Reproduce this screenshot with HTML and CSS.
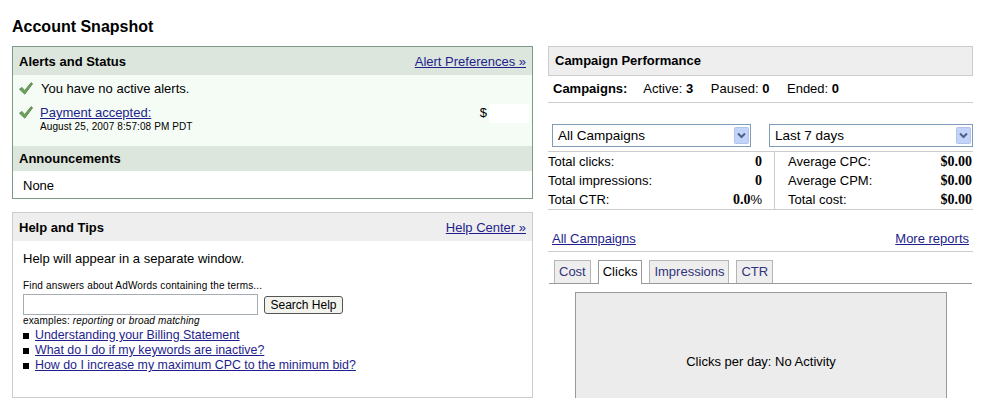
FILE: index.html
```html
<!DOCTYPE html>
<html>
<head>
    <title>Account Snapshot</title>
    <link rel="stylesheet" href="styles.css">
</head>
<body>
    <div class="page">
        <h1 class="title">Account Snapshot</h1>
        <div class="columns">
            <div class="left">
                <div class="box alerts">
                    <div class="box-head">
                        <span>Alerts and Status</span>
                        <a href="#">Alert Preferences &raquo;</a>
                    </div>
                    <div class="alerts-body">
                        <div class="alert-row">
                            <svg class="check" width="14" height="13" viewBox="0 0 14 13"><path d="M0.5 7.2 L3 5.4 L5.6 8.6 L12.2 0.6 L13.6 1.8 L5.8 12.2 Z" fill="#6fa45c" stroke="#4f7f44" stroke-width="0.8"/></svg>
                            <span>You have no active alerts.</span>
                        </div>
                        <div class="alert-row payment">
                            <svg class="check" width="14" height="13" viewBox="0 0 14 13"><path d="M0.5 7.2 L3 5.4 L5.6 8.6 L12.2 0.6 L13.6 1.8 L5.8 12.2 Z" fill="#6fa45c" stroke="#4f7f44" stroke-width="0.8"/></svg>
                            <div class="payment-text">
                                <a href="#">Payment accepted:</a>
                                <div class="date">August 25, 2007 8:57:08 PM PDT</div>
                            </div>
                            <div class="amount">$<span class="amount-box"></span></div>
                        </div>
                    </div>
                    <div class="box-head sub">Announcements</div>
                    <div class="none">None</div>
                </div>

                <div class="box help">
                    <div class="box-head grey">
                        <span>Help and Tips</span>
                        <a href="#">Help Center &raquo;</a>
                    </div>
                    <div class="help-body">
                        <p class="help-note">Help will appear in a separate window.</p>
                        <div class="small">Find answers about AdWords containing the terms...</div>
                        <div class="search">
                            <input type="text" class="search-input">
                            <button class="search-btn">Search Help</button>
                        </div>
                        <div class="small">examples: <i>reporting</i> or <i>broad matching</i></div>
                        <ul class="help-links">
                            <li><a href="#">Understanding your Billing Statement</a></li>
                            <li><a href="#">What do I do if my keywords are inactive?</a></li>
                            <li><a href="#">How do I increase my maximum CPC to the minimum bid?</a></li>
                        </ul>
                    </div>
                </div>
            </div>

            <div class="right">
                <div class="perf-head">Campaign Performance</div>
                <div class="counts">
                    <b>Campaigns:</b>
                    <span>Active: <b>3</b></span>
                    <span>Paused: <b>0</b></span>
                    <span>Ended: <b>0</b></span>
                </div>
                <div class="selects">
                    <div class="select first">
                        <span>All Campaigns</span>
                        <svg class="arrow" width="15" height="17" viewBox="0 0 15 17"><rect x="0.5" y="0.5" width="14" height="16" rx="1" fill="#c3d4fa" stroke="#b0c3ea"/><path d="M4 6.5 L7.5 10 L11 6.5" fill="none" stroke="#4d6185" stroke-width="2"/></svg>
                    </div>
                    <div class="select second">
                        <span>Last 7 days</span>
                        <svg class="arrow" width="15" height="17" viewBox="0 0 15 17"><rect x="0.5" y="0.5" width="14" height="16" rx="1" fill="#c3d4fa" stroke="#b0c3ea"/><path d="M4 6.5 L7.5 10 L11 6.5" fill="none" stroke="#4d6185" stroke-width="2"/></svg>
                    </div>
                </div>
                <div class="stats">
                    <div class="half left-half">
                        <div class="stat"><span>Total clicks:</span><b>0</b></div>
                        <div class="stat"><span>Total impressions:</span><b>0</b></div>
                        <div class="stat"><span>Total CTR:</span><span><b>0.0</b>%</span></div>
                    </div>
                    <div class="half right-half">
                        <div class="stat"><span>Average CPC:</span><b>$0.00</b></div>
                        <div class="stat"><span>Average CPM:</span><b>$0.00</b></div>
                        <div class="stat"><span>Total cost:</span><b>$0.00</b></div>
                    </div>
                </div>
                <div class="report-links">
                    <a href="#">All Campaigns</a>
                    <a href="#">More reports</a>
                </div>
                <div class="tabs">
                    <span class="tab">Cost</span>
                    <span class="tab active">Clicks</span>
                    <span class="tab">Impressions</span>
                    <span class="tab">CTR</span>
                </div>
                <div class="chart">Clicks per day: No Activity</div>
            </div>
        </div>
    </div>
</body>
</html>
```

FILE: styles.css
```css
body {
    margin: 0;
    background: #fff;
    color: #000;
    font-family: "Liberation Sans", Arial, sans-serif;
    font-size: 13px;
}

a {
    color: #1e1e8c;
}

.page {
    padding: 17px 0 0 12px;
}

.title {
    margin: 0 0 9px;
    font-size: 16px;
    line-height: 20px;
    font-weight: bold;
}

.columns {
    display: flex;
    gap: 15px;
}

.left {
    width: 521px;
}

.right {
    width: 425px;
}

/* boxes on the left */

.box {
    border: 1px solid #ccc;
}

.alerts {
    border-color: #7c9a84;
}

.box-head {
    height: 28px;
    padding: 0 6px;
    display: flex;
    align-items: center;
    justify-content: space-between;
    background: #dce6dd;
    font-weight: bold;
}

.box-head a {
    font-weight: normal;
}

.box-head.sub {
    height: 25px;
}

.box-head.grey {
    background: #eee;
}

.alerts-body {
    background: #f5fcf5;
    padding: 6px 3px 13px 6px;
}

.alert-row {
    display: flex;
    align-items: flex-start;
    line-height: 16px;
}

.alert-row .check {
    margin: 1px 8px 0 0;
    flex-shrink: 0;
}

.payment {
    margin-top: 8px;
}

.payment .check {
    margin-right: 7px;
}

.date {
    font-size: 10px;
    line-height: 12px;
    letter-spacing: 0.1px;
}

.amount {
    margin-left: auto;
    display: flex;
    align-items: flex-start;
    line-height: 16px;
}

.amount-box {
    display: inline-block;
    width: 40px;
    height: 19px;
    margin: -1px 0 0 2px;
    background: #fff;
}

.none {
    height: 27px;
    line-height: 30px;
    padding: 0 10px;
    background: #fff;
}

.help {
    margin-top: 13px;
    height: 184px;
}

.help-body {
    padding: 10px 10px 0;
}

.help-note {
    margin: 0 0 13px;
    line-height: 16px;
}

.small {
    font-size: 10px;
    line-height: 12px;
    letter-spacing: 0.15px;
}

.search {
    display: flex;
    align-items: center;
    margin: 2px 0 0;
}

.search-input {
    width: 235px;
    height: 21px;
    box-sizing: border-box;
    border: 1px solid #a5acb2;
    margin: 0;
}

.search-btn {
    margin-left: 6px;
    width: 79px;
    height: 18px;
    padding: 0;
    border: 1px solid #555;
    border-radius: 3px;
    background: #f3f3ee;
    font-family: "Liberation Sans", Arial, sans-serif;
    font-size: 12px;
}

.help-links {
    list-style: none;
    margin: 1px 0 0;
    padding: 0;
}

.help-links li {
    line-height: 15px;
    font-size: 12.4px;
    display: flex;
    align-items: center;
}

.help-links li::before {
    content: "";
    width: 6px;
    height: 6px;
    background: #000;
    margin: 0 6px 0 0;
}

/* right column */

.perf-head {
    height: 28px;
    line-height: 28px;
    padding: 0 6px;
    border: 1px solid #ccc;
    background: #eee;
    font-weight: bold;
}

.counts {
    height: 26px;
    line-height: 26px;
    padding-left: 5px;
    border-bottom: 1px solid #ccc;
}

.counts > * {
    margin-right: 14px;
}

.counts > b {
    margin-right: 13px;
}

.selects {
    display: flex;
    margin: 21px 0 0 4px;
}

.select {
    height: 21px;
    border: 1px solid #7f9db9;
    display: flex;
    align-items: center;
    justify-content: space-between;
    padding: 0 1px 0 5px;
    font-size: 13.5px;
}

.select.first {
    width: 191px;
}

.select.second {
    flex: 1;
    margin-left: 18px;
}

.stats {
    display: grid;
    grid-template-columns: 227px 1fr;
    margin-top: 4px;
    border-top: 1px solid #ccc;
    border-bottom: 1px solid #ccc;
}

.half {
    padding: 0 1px 0 0;
}

.left-half {
    border-right: 1px solid #ccc;
    padding-right: 12px;
}

.right-half {
    padding-left: 13px;
}

.stat {
    height: 19px;
    display: flex;
    align-items: center;
    justify-content: space-between;
}

.stat b {
    font-family: "Liberation Serif", "Times New Roman", serif;
    font-size: 14px;
}

.report-links {
    display: flex;
    justify-content: space-between;
    padding: 21px 4px 4px;
    line-height: 16px;
    border-bottom: 1px solid #ccc;
}

.tabs {
    display: flex;
    gap: 7px;
    margin: 7px 1px 0 1px;
    padding-left: 5px;
    border-bottom: 1px solid #999;
    height: 24px;
    align-items: flex-end;
}

.tab {
    height: 22px;
    line-height: 22px;
    padding: 0 4px;
    border: 1px solid #b5b5b5;
    border-bottom: none;
    background: #eee;
    color: #33337a;
    font-size: 13px;
}

.tab.active {
    background: #fff;
    color: #000;
    height: 23px;
    margin-bottom: -1px;
    border-color: #999;
}

.chart {
    margin: 8px 0 0 27px;
    width: 370px;
    height: 136px;
    border: 1px solid #999;
    background: #ececec;
    display: flex;
    align-items: center;
    justify-content: center;
}
```
